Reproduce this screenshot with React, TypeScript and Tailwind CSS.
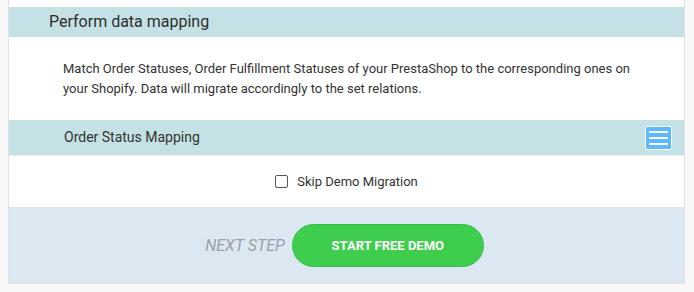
export default function App() {
	return (
		<div className="min-h-[292px] bg-[#f8f8f8] font-['Roboto',sans-serif] text-[#333]">
			<div className="ml-[8px] w-[677px] border-x border-b border-[#e2e2e2] bg-white pt-[7px]">
				{/* heading */}
				<div className="flex h-[30px] items-center bg-[#c4e1e5] pl-[40px] text-[16px] text-[#2e2e2e]">
					Perform data mapping
				</div>

				{/* description */}
				<div className="pb-[21px] pl-[54px] pr-[50px] pt-[22px] text-[13px] leading-[20px] text-[#333]">
					Match Order Statuses, Order Fulfillment Statuses of your PrestaShop to
					the corresponding ones on your Shopify. Data will migrate accordingly
					to the set relations.
				</div>

				{/* order status mapping */}
				<div className="flex h-[36px] items-center justify-between border-b border-[#e9eef0] bg-[#c4e1e5] pl-[55px] pr-[12px] text-[14px] text-[#333]">
					<span>Order Status Mapping</span>
					<div className="flex h-[24px] w-[27px] flex-col items-center justify-center gap-[4px] rounded-[2px] border border-white bg-[#5bbaff]">
						<span className="h-[2px] w-[19px] bg-white" />
						<span className="h-[2px] w-[19px] bg-white" />
						<span className="h-[2px] w-[19px] bg-white" />
					</div>
				</div>

				{/* skip demo */}
				<div className="flex h-[52px] items-center justify-center gap-[9px] border-b border-[#dfe3e6] text-[13px] text-[#333]">
					<span className="h-[13px] w-[13px] rounded-[2px] border border-[#555] bg-white" />
					<span>Skip Demo Migration</span>
				</div>

				{/* footer */}
				<div className="flex h-[75px] items-center justify-center gap-[7px] bg-[#dce8f1] pr-[4px]">
					<span className="text-[16px] italic text-[#9aa0a6]">NEXT STEP</span>
					<button className="flex h-[43px] w-[192px] items-center justify-center rounded-full border border-[#37c047] bg-[#3fcd4e] text-[13px] font-bold text-white">
						START FREE DEMO
					</button>
				</div>
			</div>
		</div>
	);
}
